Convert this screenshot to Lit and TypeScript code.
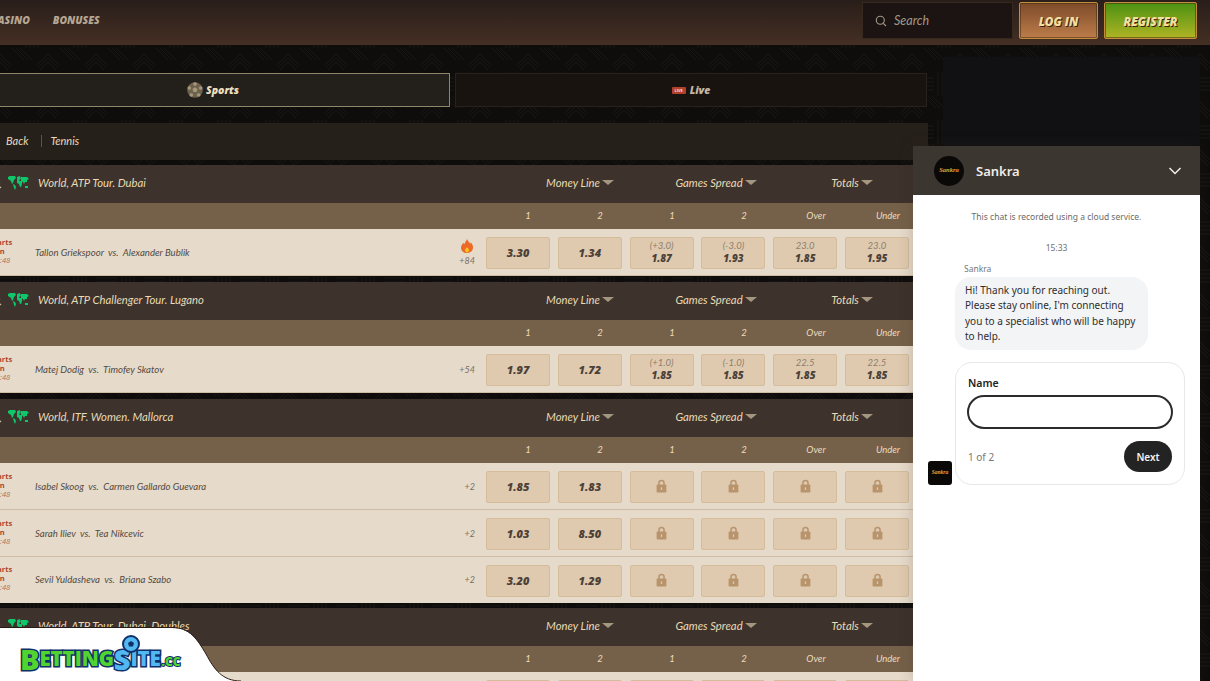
import { LitElement, html, css, svg } from "lit";
import { customElement } from "lit/decorators.js";

type Odd = { top?: string; val?: string };
type Match = { a: string; b: string; more: string; hot?: boolean; odds: Odd[] };
type Section = { title: string; matches: Match[] };

const lockAll: Odd[] = [{}, {}, {}, {}];
const sections: Section[] = [
  {
    title: "World, ATP Tour. Dubai",
    matches: [
      {
        a: "Tallon Griekspoor", b: "Alexander Bublik", more: "+84", hot: true,
        odds: [{ val: "3.30" }, { val: "1.34" }, { top: "(+3.0)", val: "1.87" }, { top: "(-3.0)", val: "1.93" }, { top: "23.0", val: "1.85" }, { top: "23.0", val: "1.95" }],
      },
    ],
  },
  {
    title: "World, ATP Challenger Tour. Lugano",
    matches: [
      {
        a: "Matej Dodig", b: "Timofey Skatov", more: "+54",
        odds: [{ val: "1.97" }, { val: "1.72" }, { top: "(+1.0)", val: "1.85" }, { top: "(-1.0)", val: "1.85" }, { top: "22.5", val: "1.85" }, { top: "22.5", val: "1.85" }],
      },
    ],
  },
  {
    title: "World, ITF. Women. Mallorca",
    matches: [
      { a: "Isabel Skoog", b: "Carmen Gallardo Guevara", more: "+2", odds: [{ val: "1.85" }, { val: "1.83" }, ...lockAll] },
      { a: "Sarah Iliev", b: "Tea Nikcevic", more: "+2", odds: [{ val: "1.03" }, { val: "8.50" }, ...lockAll] },
      { a: "Sevil Yuldasheva", b: "Briana Szabo", more: "+2", odds: [{ val: "3.20" }, { val: "1.29" }, ...lockAll] },
    ],
  },
  {
    title: "World, ATP Tour. Dubai. Doubles",
    matches: [{ a: "", b: "", more: "", odds: [{ val: "" }, { val: "" }, { val: "" }, { val: "" }, { val: "" }, { val: "" }] }],
  },
];

const labels = ["1", "2", "1", "2", "Over", "Under"];

const lock = svg`<svg class="lock" viewBox="0 0 11 14" width="11" height="14"><path d="M2.200 6V4a3.300 3.300 0 0 1 6.600 0v2H7.300V4a1.800 1.800 0 0 0-3.600 0v2z" fill="#b8946c"/><rect x="0.600" y="5.600" width="9.800" height="8" rx="1" fill="#b8946c"/><rect x="4.900" y="8.400" width="1.200" height="2.600" fill="#dfcab0"/></svg>`;

const flame = svg`<svg viewBox="0 0 12 14" width="12" height="14"><path d="M6.200 0c.5 2.400 2.200 3 3.200 4.800.3-.5.4-1 .4-1.500C11.200 5 12 6.500 12 8.500 12 11.700 9.500 14 6 14S0 11.700 0 8.700c0-2.400 1.500-3.600 2.500-5 .2.700.4 1.200.9 1.600C3.900 3.500 5 2 6.200 0z" fill="#ec6a25"/><path d="M6 8c.4 1 1.900 1.500 1.900 3.300C7.900 12.600 7 13.400 6 13.400s-1.900-.8-1.900-2.100C4.100 9.800 5.500 9.200 6 8z" fill="#f8c521"/></svg>`;

const worldMap = svg`<svg viewBox="0 0 21 14" width="21" height="14"><g fill="#0fc76b"><path d="M0 1l2-1h5l1 2-2 2-1 3-1 1-1-3-3-2z"/><path d="M5 8l2 1 1 2-1 3-1-2z"/><path d="M9 1l3-1 1 3-2 1 1 1 2 0 0 3-1 3-1 0-1-3-2-1 0-3z"/><path d="M13 1l6 0 2 2-2 1 0 2-2 0-1 2-1-2-2-1z"/><path d="M17 10l3 0 0 2-3 0z"/></g></svg>`;

const ball = svg`<svg viewBox="0 0 16 16" width="16" height="16"><circle cx="8" cy="8" r="7.800" fill="#6d624e"/><g fill="#a8987a"><path d="M8 5.300l2.500 1.800-1 3H6.500l-1-3z"/><circle cx="8" cy="2" r="1.800"/><circle cx="2.300" cy="6" r="1.800"/><circle cx="13.700" cy="6" r="1.800"/><circle cx="4.300" cy="13" r="1.800"/><circle cx="11.700" cy="13" r="1.800"/></g></svg>`;

const cup = svg`<svg viewBox="0 0 12 12" width="12" height="12" fill="none" stroke="#cdbf9c" stroke-width="1.200"><circle cx="5.500" cy="5" r="4"/><path d="M8 8l3 3"/></svg>`;

const pattern = `url("data:image/svg+xml,%3Csvg xmlns='http://www.w3.org/2000/svg' width='48' height='48'%3E%3Cg fill='none' stroke='%23181716' stroke-width='1'%3E%3Cpath d='M0 6l12 12M0 10l10 10M0 14l8 8M12 0l12 12M16 0l12 12M20 0l12 12'/%3E%3Cpath d='M26 24v24M30 24v24M34 24v24M38 24v24'/%3E%3Cpath d='M48 6L36 18M48 10L38 20M48 14L40 22'/%3E%3Cpath d='M0 30h22M0 34h22M0 38h22M0 42h22'/%3E%3C/g%3E%3C/svg%3E")`;

@customElement("app-root")
export class AppRoot extends LitElement {
  static styles = css`
    :host {
      display: block;
      position: relative;
      width: 1210px;
      height: 681px;
      overflow: hidden;
      background-color: #0e0d0c;
      background-image: var(--pattern);
      font-family: "Lato", "Liberation Sans", sans-serif;
    }
    .top {
      height: 45px;
      box-sizing: border-box;
      display: flex;
      align-items: center;
      padding: 0 13px 4px 0;
      background: linear-gradient(180deg, #291e1a 0%, #442f23 100%);
    }
    .nav {
      display: flex;
      gap: 23px;
      margin-left: -9px;
      flex: 1;
      padding-bottom: 1px;
      color: #b6a693;
      font-family: "Open Sans", "Liberation Sans", sans-serif;
      font-weight: 800;
      font-style: italic;
      font-size: 10.400px;
    }
    .search {
      width: 151px;
      height: 37px;
      box-sizing: border-box;
      margin-right: 6px;
      display: flex;
      align-items: center;
      gap: 7px;
      padding-left: 12px;
      background: #1b1412;
      border: 1px solid #38291f;
      color: #a39889;
      font-style: italic;
      font-size: 12.500px;
    }
    .btn {
      height: 37px;
      box-sizing: border-box;
      display: flex;
      align-items: center;
      justify-content: center;
      font-family: "Open Sans", "Liberation Sans", sans-serif;
      font-weight: 800;
      font-style: italic;
      font-size: 11.800px;
      color: #f2dfa0;
      text-shadow: 1px 1px 0 #3a2412;
      border: 1px solid #c48c3e;
      border-radius: 2px;
      box-shadow: inset 0 0 0 1px rgba(60, 35, 10, 0.5);
    }
    .login {
      width: 79px;
      margin-right: 6px;
      background: linear-gradient(180deg, #7d4a2a, #bd7d4a);
    }
    .register {
      width: 93px;
      background: linear-gradient(180deg, #4b9113, #b0b424);
    }
    .layout {
      display: flex;
    }
    .main {
      width: 948px;
      margin: 28px 0 0 -20px;
      flex: none;
    }
    .aside {
      width: 257px;
      height: 100px;
      margin: 12px 0 0 15px;
      background: #111114;
      flex: none;
    }
    .tabs {
      display: flex;
      gap: 5px;
    }
    .tab {
      height: 34px;
      box-sizing: border-box;
      display: flex;
      align-items: center;
      justify-content: center;
      gap: 3px;
      font-family: "Open Sans", "Liberation Sans", sans-serif;
      font-style: italic;
      font-size: 10.500px;
      font-weight: 800;
      color: #ecdfc0;
    }
    .tab.on {
      width: 470px;
      padding-right: 4px;
      background: #231f1a;
      border: 1px solid #8f8568;
    }
    .tab.off {
      width: 472px;
      background: #191310;
      border: 1px solid #2a211b;
      color: #c4b8a5;
    }
    .live-badge {
      width: 14px;
      height: 7px;
      background: #b2402c;
      border-radius: 1px;
      color: #f5dfd5;
      font-size: 4px;
      line-height: 7px;
      text-align: center;
      font-weight: 700;
      font-style: normal;
      margin-right: 1px;
    }
    .crumb {
      margin-top: 16px;
      height: 37px;
      box-sizing: border-box;
      padding: 0 0 2px 26px;
      display: flex;
      align-items: center;
      background: #26201b;
      color: #e9dcbd;
      font-style: italic;
      font-size: 11px;
    }
    .crumb .sep {
      width: 1px;
      height: 12px;
      background: #6b5037;
      margin: 0 8px 0 13px;
    }
    .section {
      margin-top: 6px;
    }
    .section.first {
      margin-top: 5px;
    }
    .section.last {
      margin-top: 5px;
    }
    .head {
      height: 38px;
      box-sizing: border-box;
      display: grid;
      grid-template-columns: 1fr repeat(3, 136px);
      padding: 0 8px 3px 0;
      align-items: center;
      background: #3d322c;
      color: #e8dbb6;
      font-style: italic;
      font-size: 11.300px;
    }
    .title {
      display: flex;
      align-items: center;
      padding-left: 10px;
    }
    .title .map {
      display: flex;
      margin: 0 9px 0 6px;
    }
    .group {
      display: flex;
      align-items: center;
      justify-content: center;
      gap: 2px;
    }
    .caret {
      width: 0;
      height: 0;
      border-left: 6px solid transparent;
      border-right: 6px solid transparent;
      border-top: 5px solid #a59680;
    }
    .sub {
      height: 26px;
      box-sizing: border-box;
      display: grid;
      grid-template-columns: 1fr repeat(6, 72px);
      padding: 0 4px 2px 0;
      align-items: center;
      background: #75604a;
      color: #ecdcb9;
      font-style: italic;
      font-size: 9.500px;
      text-align: center;
    }
    .row {
      height: 47px;
      box-sizing: border-box;
      display: flex;
      padding: 8px 19px 0 8px;
      background: #e6dacb;
      border-bottom: 1px solid #cfbca5;
    }
    .row.end {
      height: 46px;
      border-bottom-color: #e6dacb;
    }
    .time {
      width: 26px;
      margin-right: 21px;
      flex: none;
      align-self: center;
      margin-top: -10px;
      text-align: center;
      font-family: "Open Sans", "Liberation Sans", sans-serif;
      font-size: 7.500px;
      line-height: 9px;
      font-weight: 700;
      color: #b0452f;
    }
    .time span {
      display: block;
    }
    .time .clock {
      color: #b0705a;
      font-weight: 400;
      font-style: italic;
    }
    .teams {
      flex: 1;
      align-self: center;
      margin-top: -8px;
      font-style: italic;
      font-size: 9.600px;
      color: #544a40;
      white-space: pre;
    }
    .more {
      width: 30px;
      margin-right: 11px;
      align-self: center;
      margin-top: -8px;
      text-align: right;
      font-style: italic;
      font-size: 9px;
      color: #7a6f62;
      display: flex;
      flex-direction: column;
      align-items: flex-end;
      gap: 2px;
    }
    .more .fire {
      display: flex;
      margin-right: 2px;
    }
    .odds {
      display: grid;
      grid-template-columns: repeat(6, 64px);
      column-gap: 7.800px;
      flex: none;
    }
    .cell {
      height: 32px;
      box-sizing: border-box;
      padding-bottom: 2px;
      display: flex;
      flex-direction: column;
      align-items: center;
      justify-content: center;
      background: #dfcab0;
      border: 1px solid #d5bd9b;
      border-radius: 2px;
      color: #4b4138;
      font-family: "Open Sans", "Liberation Sans", sans-serif;
      font-style: italic;
      font-weight: 800;
      font-size: 11px;
      line-height: 13px;
    }
    .cell.two {
      font-size: 10px;
    }
    .cell .hcp {
      font-family: "Lato", "Liberation Sans", sans-serif;
      font-weight: 400;
      font-size: 9.500px;
      color: #8d7e6d;
    }
    .lock {
      display: block;
    }
    .chat {
      position: absolute;
      left: 913px;
      top: 146px;
      width: 287px;
      height: 535px;
      background: #fff;
      box-shadow: 0 0 14px rgba(60, 40, 20, 0.22);
      font-family: "Noto Sans", "Open Sans", sans-serif;
      display: flex;
      flex-direction: column;
    }
    .chat-head {
      height: 49px;
      flex: none;
      box-sizing: border-box;
      display: flex;
      align-items: center;
      padding: 0 18px 0 21px;
      background: #3c3630;
      color: #efece8;
      font-size: 13px;
      font-weight: 600;
    }
    .avatar {
      width: 30px;
      height: 30px;
      border-radius: 50%;
      background: #0b0908;
      display: flex;
      align-items: center;
      justify-content: center;
      margin-right: 12px;
    }
    .mini {
      color: #e2a93a;
      font-family: "Liberation Serif", serif;
      font-style: italic;
      font-weight: 700;
      font-size: 6.500px;
      line-height: 1;
    }
    .chev {
      margin-left: auto;
      display: flex;
    }
    .chat-body {
      padding: 15px 15px 0;
      display: flex;
      flex-direction: column;
      color: #333;
    }
    .notice {
      text-align: center;
      font-size: 8.500px;
      line-height: 13px;
      color: #6a6a6a;
    }
    .stamp {
      margin-top: 18px;
      text-align: center;
      font-size: 8.500px;
      line-height: 13px;
      color: #6f6f6f;
    }
    .who {
      margin: 9px 0 0 36px;
      font-size: 8.500px;
      line-height: 12px;
      color: #777;
    }
    .bubble {
      margin: 2px 0 0 27px;
      width: 193px;
      box-sizing: border-box;
      padding: 6px 9px 6px 10px;
      background: #f3f4f6;
      border-radius: 16px;
      font-size: 10px;
      line-height: 15.300px;
      color: #2e2e2e;
    }
    .form-line {
      display: flex;
      align-items: flex-end;
      gap: 3px;
      margin-top: 12px;
    }
    .small-av {
      width: 24px;
      height: 24px;
      border-radius: 3px;
      background: #0b0908;
      display: flex;
      align-items: center;
      justify-content: center;
    }
    .small-av .mini {
      font-size: 5.500px;
    }
    .card {
      width: 230px;
      height: 123px;
      box-sizing: border-box;
      border: 1px solid #e8e8e8;
      border-radius: 17px;
      padding: 12px 12px 0 12px;
    }
    .card label {
      display: block;
      font-size: 10.500px;
      line-height: 16px;
      font-weight: 600;
      color: #222;
    }
    .field {
      margin: 4px 0 0 -1px;
      width: 206px;
      height: 34px;
      box-sizing: border-box;
      border: 2px solid #2b2b2b;
      border-radius: 17px;
    }
    .foot {
      margin-top: 12px;
      display: flex;
      align-items: center;
      justify-content: space-between;
      font-size: 10px;
      color: #777;
    }
    .next {
      width: 48px;
      height: 31px;
      border-radius: 16px;
      background: #232323;
      color: #f4f4f4;
      font-size: 10px;
      font-weight: 600;
      display: flex;
      align-items: center;
      justify-content: center;
    }
    .brand {
      position: absolute;
      left: 0;
      bottom: 0;
      width: 242px;
      height: 54px;
    }
    .shape {
      position: absolute;
      left: 0;
      top: 0;
    }
    .logo {
      position: absolute;
      left: 20px;
      top: 10px;
      height: 34px;
      display: flex;
      align-items: flex-end;
      font-family: "Open Sans", "Liberation Sans", sans-serif;
      font-weight: 800;
      font-size: 20.500px;
      line-height: 25px;
      letter-spacing: -0.100px;
      -webkit-text-stroke: 3px #10306a;
      paint-order: stroke fill;
    }
    .logo .g {
      color: #52d430;
    }
    .logo .b {
      color: #52b8f2;
    }
    .logo .big {
      font-size: 29px;
    }
    .logo .cc {
      font-size: 12px;
      line-height: 19px;
      color: #52d430;
      -webkit-text-stroke-width: 2px;
      margin-left: 1px;
    }
    .logo-ball {
      position: absolute;
      left: 122px;
      top: 8px;
    }
  `;

  connectedCallback() {
    super.connectedCallback();
    this.style.setProperty("--pattern", pattern);
  }

  private renderMatch(m: Match, end: boolean) {
    return html`<div class="row ${end ? "end" : ""}">
      <div class="time"><span>Starts</span><span>in</span><span class="clock">15:48</span></div>
      <div class="teams">${m.a ? `${m.a}  vs.  ${m.b}` : ""}</div>
      <div class="more">${m.hot ? html`<span class="fire">${flame}</span>` : ""}<span>${m.more}</span></div>
      <div class="odds">
        ${m.odds.map((o) =>
          o.val === undefined
            ? html`<div class="cell">${lock}</div>`
            : html`<div class="cell ${o.top ? "two" : ""}">
                ${o.top ? html`<span class="hcp">${o.top}</span>` : ""}<span>${o.val}</span>
              </div>`
        )}
      </div>
    </div>`;
  }

  render() {
    return html`
      <div class="top">
        <div class="nav"><span>CASINO</span><span>BONUSES</span></div>
        <div class="search">
          <svg viewBox="0 0 12 12" width="12" height="12" fill="none" stroke="#a39889" stroke-width="1.100"><circle cx="5.300" cy="5.300" r="4"/><path d="M8.300 8.300L11 11"/></svg>
          Search
        </div>
        <div class="btn login">LOG IN</div>
        <div class="btn register">REGISTER</div>
      </div>
      <div class="layout">
        <div class="main">
          <div class="tabs">
            <div class="tab on">${ball}<span>Sports</span></div>
            <div class="tab off"><span class="live-badge">LIVE</span><span>Live</span></div>
          </div>
          <div class="crumb"><span>Back</span><span class="sep"></span><span>Tennis</span></div>
          ${sections.map(
            (s, i) => html`<div class="section ${i === 0 ? "first" : ""} ${i === sections.length - 1 ? "last" : ""}">
              <div class="head">
                <div class="title">${cup}<span class="map">${worldMap}</span><span>${s.title}</span></div>
                <div class="group">Money Line<span class="caret"></span></div>
                <div class="group">Games Spread<span class="caret"></span></div>
                <div class="group">Totals<span class="caret"></span></div>
              </div>
              <div class="sub"><span></span>${labels.map((l) => html`<span>${l}</span>`)}</div>
              ${s.matches.map((m, j) => this.renderMatch(m, s.matches.length > 1 && j === s.matches.length - 1))}
            </div>`
          )}
        </div>
        <div class="aside"></div>
      </div>

      <div class="chat">
        <div class="chat-head">
          <span class="avatar"><span class="mini">Sankra</span></span>
          <span>Sankra</span>
          <span class="chev"><svg viewBox="0 0 14 8" width="14" height="8" fill="none" stroke="#f2f0ec" stroke-width="1.500"><path d="M1.500 1l5.500 5.500L12.500 1"/></svg></span>
        </div>
        <div class="chat-body">
          <div class="notice">This chat is recorded using a cloud service.</div>
          <div class="stamp">15:33</div>
          <div class="who">Sankra</div>
          <div class="bubble">Hi! Thank you for reaching out.<br />Please stay online, I'm connecting<br />you to a specialist who will be happy<br />to help.</div>
          <div class="form-line">
            <div class="small-av"><span class="mini">Sankra</span></div>
            <div class="card">
              <label>Name</label>
              <div class="field"></div>
              <div class="foot"><span>1 of 2</span><span class="next">Next</span></div>
            </div>
          </div>
        </div>
      </div>

      <div class="brand">
        <svg class="shape" viewBox="0 0 242 54" width="242" height="54">
          <path d="M0 1H172C190 1 197 12 206 27C214 42 222 54 241 54H0Z" fill="#fff"/>
          <path d="M0 .5H172C190 .5 197 12 206 27C214 42 222 54 241 54" fill="none" stroke="#2a1c14" stroke-width="1"/>
        </svg>
        <div class="logo">
          <span class="g big">B</span><span class="g">ETTING</span><span class="b big">S</span><span class="b">ITE</span><span class="cc">.CC</span>
        </div>
        <svg class="logo-ball" viewBox="0 0 18 18" width="18" height="18">
          <circle cx="9" cy="9" r="8" fill="#52b8f2" stroke="#10306a" stroke-width="2"/>
          <path d="M9 6l3 2-1 3.500H7L6 8z" fill="#10306a"/>
        </svg>
      </div>
    `;
  }
}
